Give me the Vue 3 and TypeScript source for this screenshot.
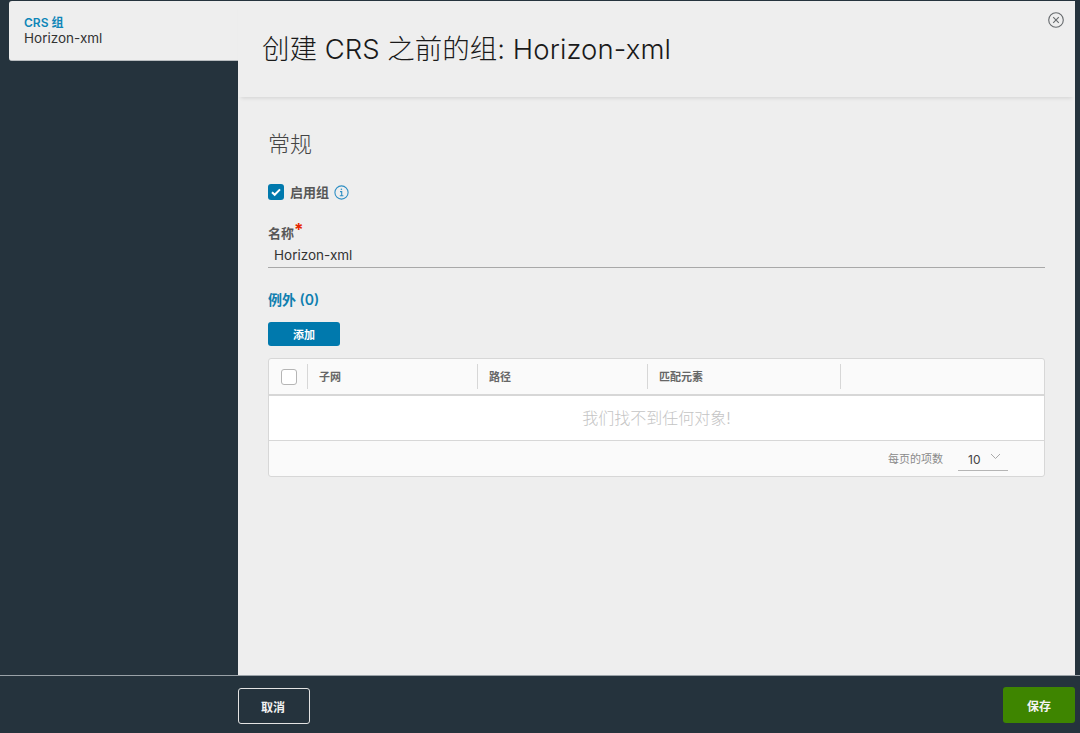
<script setup lang="ts">
const columns: { label: string; width: string }[] = [
  { label: '子网', width: '170px' },
  { label: '路径', width: '170px' },
  { label: '匹配元素', width: '193px' },
]
</script>

<template>
  <div class="page">
    <div class="top">
      <aside class="side">
        <div class="step">
          <div class="step-title">CRS 组</div>
          <div class="step-name">Horizon-xml</div>
        </div>
      </aside>
      <main class="panel">
        <header class="head">
          <h1>创建 CRS 之前的组: <span class="h1-name">Horizon-xml</span></h1>
          <svg class="close" width="16" height="16" viewBox="0 0 16 16" fill="none" stroke="#666a6d">
            <circle cx="8" cy="8" r="7.3" stroke-width="1.1" />
            <path d="M5.2 5.2l5.6 5.6M10.8 5.2l-5.6 5.6" stroke-width="1.1" />
          </svg>
        </header>
        <section class="body">
          <h2>常规</h2>
          <div class="check-row">
            <span class="check">
              <svg width="16" height="16" viewBox="0 0 16 16" fill="none">
                <path d="M4 8.2l2.7 2.6L12 5.4" stroke="#fff" stroke-width="2" />
              </svg>
            </span>
            <span class="check-label">启用组</span>
            <svg class="info" width="15" height="15" viewBox="0 0 15 15" fill="none" stroke="#2f8fc4">
              <circle cx="7.5" cy="7.5" r="6.6" stroke-width="1.1" />
              <path d="M6 6.6h1.7v4M5.8 10.8h3.6" stroke-width="1.1" />
              <circle cx="7.4" cy="4.3" r="0.8" fill="#2f8fc4" stroke="none" />
            </svg>
          </div>
          <div class="field-label">名称<span class="req">*</span></div>
          <div class="field-value">Horizon-xml</div>
          <div class="section-link">例外 (0)</div>
          <button class="add" type="button">添加</button>
          <div class="grid">
            <div class="grid-head">
              <div class="box-cell"><span class="box"></span></div>
              <div v-for="c in columns" :key="c.label" class="col" :style="{ width: c.width }">
                <span class="col-label">{{ c.label }}</span>
              </div>
              <div class="col-last"></div>
            </div>
            <div class="grid-empty">我们找不到任何对象!</div>
            <div class="grid-foot">
              <span class="per">每页的项数</span>
              <span class="select">
                <span>10</span>
                <svg width="11" height="7" viewBox="0 0 11 7" fill="none" stroke="#a9a9a9">
                  <path d="M1 1l4.5 4.5L10 1" stroke-width="1" />
                </svg>
              </span>
            </div>
          </div>
        </section>
      </main>
    </div>
    <footer class="foot">
      <button class="cancel" type="button">取消</button>
      <button class="save" type="button">保存</button>
    </footer>
  </div>
</template>

<style>
html, body { margin: 0; background: #25333d; }
</style>

<style scoped>
.page {
  width: 1080px;
  height: 733px;
  overflow: hidden;
  background: #25333d;
  font-family: "Inter", "Noto Sans CJK SC", sans-serif;
  display: flex;
  flex-direction: column;
  box-sizing: border-box;
  padding-top: 1px;
}
.top { display: flex; height: 674px; }
.side { width: 238px; padding-left: 9px; box-sizing: border-box; flex: none; }
.step {
  height: 60px;
  background: #eeeeee;
  border-radius: 3px 0 0 3px;
  border-bottom: 1px solid #b9bdc0;
  box-sizing: border-box;
  padding: 14px 15px 0;
}
.step-title { font-size: 12px; line-height: 15px; font-weight: 600; color: #0f86b8; }
.step-name { font-size: 13.5px; line-height: 16px; color: #333; }
.panel { width: 837px; flex: none; background: #eeeeee; display: flex; flex-direction: column; }
.head {
  height: 96px;
  flex: none;
  position: relative;
  padding: 30px 0 0 24px;
  box-sizing: border-box;
  box-shadow: 0 4px 4px -3px rgba(0, 0, 0, 0.12);
}
h1 { margin: 0; font-size: 27.5px; line-height: 36px; font-weight: 300; color: #1a1a1a; }
.h1-name { letter-spacing: 0.1px; }
.close { position: absolute; top: 11px; right: 11px; }
.body { padding: 0 30px; flex: 1; }
h2 { margin: 31px 0 0; font-size: 22px; line-height: 32px; font-weight: 300; color: #444; }
.check-row { display: flex; align-items: center; margin-top: 24px; height: 16px; }
.check {
  width: 16px;
  height: 16px;
  border-radius: 3px;
  background: #0079ad;
  display: block;
}
.check svg { display: block; }
.check-label { margin-left: 6px; margin-bottom: 2px; font-size: 13px; font-weight: 700; color: #575757; }
.info { margin-left: 5px; }
.field-label { margin-top: 24px; font-size: 13px; line-height: 18px; font-weight: 700; color: #575757; }
.req { color: #e62700; font-size: 17px; line-height: 10px; position: relative; top: -2px; }
.field-value {
  margin-top: 5px;
  height: 20px;
  padding-left: 6px;
  font-size: 13.5px;
  line-height: 17px;
  color: #333;
  border-bottom: 1px solid #a8a8a8;
  box-sizing: content-box;
}
.section-link { margin-top: 23px; font-size: 14px; line-height: 18px; font-weight: 600; color: #0f7fb0; }
.add {
  display: block;
  margin-top: 13px;
  width: 72px;
  height: 24px;
  border: 0;
  border-radius: 3px;
  background: #0079ad;
  color: #fff;
  font: 700 11px "Inter", "Noto Sans CJK SC", sans-serif;
  padding: 0;
}
.grid {
  margin-top: 12px;
  width: 777px;
  height: 119px;
  box-sizing: border-box;
  border: 1px solid #d7d7d7;
  border-radius: 3px;
  background: #fafafa;
  display: flex;
  flex-direction: column;
  overflow: hidden;
}
.grid-head {
  height: 35px;
  flex: none;
  display: flex;
  align-items: center;
  border-bottom: 2px solid #d7d7d7;
  box-sizing: content-box;
}
.box-cell { width: 38px; height: 25px; flex: none; display: flex; align-items: center; padding-left: 12px; box-sizing: border-box; }
.box { display: block; width: 16px; height: 16px; box-sizing: border-box; border: 1px solid #b5b5b5; border-radius: 3px; background: #fff; }
.col { height: 25px; flex: none; box-sizing: border-box; border-left: 1px solid #d7d7d7; padding-left: 11px; display: flex; align-items: center; }
.col-label { font-size: 11px; font-weight: 700; color: #666; margin-bottom: 2px; }
.col-last { flex: 1; height: 25px; border-left: 1px solid #d7d7d7; }
.grid-empty {
  height: 44px;
  flex: none;
  background: #fff;
  border-bottom: 1px solid #d7d7d7;
  text-align: center;
  font-size: 16px;
  line-height: 44px;
  font-weight: 300;
  color: #c4c4c4;
  box-sizing: content-box;
}
.grid-foot { flex: 1; display: flex; justify-content: flex-end; align-items: flex-start; padding-right: 36px; }
.per { font-size: 11px; line-height: 14px; color: #8a8a8a; margin-top: 11px; margin-right: 15px; }
.select {
  width: 50px;
  height: 27px;
  margin-top: 3px;
  box-sizing: border-box;
  border-bottom: 1px solid #b5b5b5;
  display: flex;
  align-items: center;
  padding: 4px 0 0 10px;
  gap: 10px;
  font-size: 12px;
  color: #444;
}
.select svg { margin-top: -5px; }
.foot {
  flex: 1;
  border-top: 1px solid #9aa2a8;
  display: flex;
  align-items: flex-start;
  position: relative;
}
.cancel {
  margin: 12px 0 0 238px;
  width: 72px;
  height: 36px;
  background: transparent;
  border: 1px solid #e3e3e3;
  border-radius: 3px;
  color: #f2f2f2;
  font: 700 12px "Inter", "Noto Sans CJK SC", sans-serif;
  padding: 0 2px 0 0;
}
.save {
  margin: 11px 0 0 693px;
  width: 72px;
  height: 36px;
  background: #3e8500;
  border: 0;
  border-radius: 3px;
  color: #f4f4f4;
  font: 700 12px "Inter", "Noto Sans CJK SC", sans-serif;
  padding: 0;
}
</style>
